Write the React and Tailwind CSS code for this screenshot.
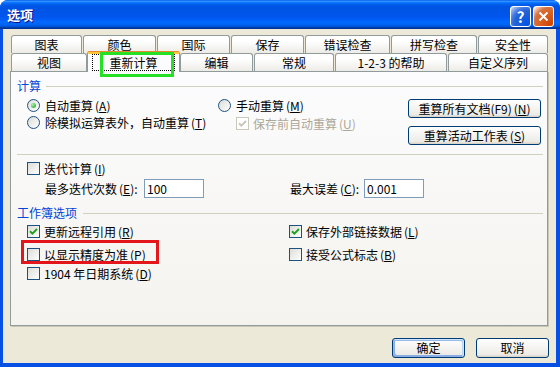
import React from 'react';

const font = "font-['Noto_Sans_CJK_SC',sans-serif]";
const xpButton =
  'flex items-center justify-center rounded-[3px] border border-[#003C74] bg-[linear-gradient(180deg,#fff,#ECEBE6_86%,#D6D0C5)] text-black';
const tabBase =
  'flex h-[18px] items-center justify-center rounded-t-[3px] border border-b-0 border-[#919B9C] bg-[linear-gradient(180deg,#fff,#fff_30%,#ECEBE6)]';

function Key({ k, muted }) {
  return (
    <span className={`ml-[2px] ${muted ? 'text-[#ACA899]' : ''}`}>
      (<span className="underline">{k}</span>)
    </span>
  );
}

function Box({ checked, disabled }) {
  return (
    <span
      className={`flex h-[13px] w-[13px] shrink-0 items-center justify-center border ${
        disabled ? 'border-[#CAC8BB] bg-white' : 'border-[#1C5180] bg-[linear-gradient(135deg,#DCDCD7,#fff)]'
      }`}
    >
      {checked && (
        <svg width="9" height="9" viewBox="0 0 9 9">
          <path d="M1 4.2 L3.4 6.6 L8 2" fill="none" stroke={disabled ? '#CAC8BB' : '#21A121'} strokeWidth="2" />
        </svg>
      )}
    </span>
  );
}

function Radio({ checked }) {
  return (
    <span className="flex h-[13px] w-[13px] shrink-0 items-center justify-center rounded-full border border-[#1C5180] bg-[linear-gradient(135deg,#DCDCD7,#fff)]">
      {checked && <span className="h-[5px] w-[5px] rounded-full bg-[radial-gradient(circle_at_30%_30%,#A5F0A5,#21A121)]" />}
    </span>
  );
}

function Check({ checked, disabled, children }) {
  return (
    <div className={`flex h-[17px] items-center gap-[4px] ${disabled ? 'text-[#ACA899]' : ''}`}>
      <Box checked={checked} disabled={disabled} />
      <span className="whitespace-nowrap">{children}</span>
    </div>
  );
}

function Option({ checked, children }) {
  return (
    <div className="flex h-[17px] items-center gap-[5px]">
      <Radio checked={checked} />
      <span className="whitespace-nowrap">{children}</span>
    </div>
  );
}

function Group({ title, lineGap }) {
  return (
    <div className="flex h-[14px] items-center">
      <span className="whitespace-nowrap text-[#0046D5]">{title}</span>
      <span className={`h-px flex-1 bg-[#D0D0BF] ${lineGap}`} />
    </div>
  );
}

export default function App() {
  return (
    <div
      className={`${font} flex h-[367px] w-[560px] flex-col overflow-hidden rounded-t-[8px] bg-[#0850E4] text-[12px] leading-[14px] text-black`}
    >
      {/* title bar */}
      <div className="flex h-[29px] shrink-0 items-center bg-[linear-gradient(180deg,#0058EE_0%,#3593FF_4%,#288EFF_6%,#127DFF_8%,#036FFC_10%,#0262EE_14%,#0057E5_20%,#0054E3_24%,#0055EB_56%,#005BF5_66%,#026AFE_76%,#0062EF_86%,#0052D6_92%,#0040AB_94%,#003092_100%)] pl-[7px] pr-[6px]">
        <span className="text-[13px] font-bold text-white [text-shadow:1px_1px_#0F1089]">选项</span>
        <div className="ml-auto mt-[3px] flex gap-[2px]">
          <div className="flex h-[21px] w-[21px] items-center justify-center rounded-[3px] border border-white bg-[radial-gradient(circle_at_90%_90%,#0054E9_0%,#2263D5_55%,#4479E4_70%,#A3BBEC_90%,#fff_100%)] text-[15px] font-bold leading-none text-white">
            ?
          </div>
          <div className="flex h-[21px] w-[21px] items-center justify-center rounded-[3px] border border-white bg-[radial-gradient(circle_at_90%_90%,#CC4600_0%,#DC6527_55%,#CD7546_70%,#FFCCB2_90%,#fff_100%)]">
            <svg width="11" height="11" viewBox="0 0 11 11">
              <path d="M1.5 1.5 L9.5 9.5 M9.5 1.5 L1.5 9.5" stroke="#fff" strokeWidth="2" />
            </svg>
          </div>
        </div>
      </div>

      {/* window body */}
      <div className="mb-[4px] ml-[3px] mr-[4px] flex flex-1 flex-col bg-[#ECE9D8] pt-[6px]">
        {/* tab row 1 */}
        <div className="ml-[8px] flex gap-[1px]">
          <div className={`${tabBase} w-[71px]`}>图表</div>
          <div className={`${tabBase} w-[73px]`}>颜色</div>
          <div className={`${tabBase} w-[73px]`}>国际</div>
          <div className={`${tabBase} w-[73px]`}>保存</div>
          <div className={`${tabBase} w-[85px]`}>错误检查</div>
          <div className={`${tabBase} w-[86px]`}>拼写检查</div>
          <div className={`${tabBase} w-[70px]`}>安全性</div>
        </div>
        {/* tab row 2 */}
        <div className="ml-[8px] flex h-[18px] items-start">
          <div className={`${tabBase} w-[76px]`}>视图</div>
          <div className="relative z-10 -mt-[2px] flex h-[21px] w-[93px] flex-col overflow-visible rounded-t-[3px] border-x border-[#919B9C] bg-[#FCFCFE]">
            <div className="h-px rounded-t-[3px] bg-[#E68B2C]" />
            <div className="h-[2px] bg-[#FFC73C]" />
            <div className="mx-[4px] flex h-[17px] items-center justify-center border border-dotted border-black">重新计算</div>
            <div className="absolute left-[12px] top-[1px] h-[25px] w-[74px] border-[3px] border-[#26E026]" />
          </div>
          <div className={`${tabBase} w-[73px]`}>编辑</div>
          <div className={`${tabBase} ml-[1px] w-[80px]`}>常规</div>
          <div className={`${tabBase} ml-[1px] w-[112px]`}>1-2-3 的帮助</div>
          <div className={`${tabBase} ml-[1px] w-[100px]`}>自定义序列</div>
        </div>

        {/* panel */}
        <div className="ml-[7px] flex h-[255px] w-[538px] flex-col border border-[#919B9C] bg-[linear-gradient(180deg,#FCFCFE,#F4F3EE)] pl-[6px] pr-[4px] pt-[7px] shadow-[1px_1px_0_#C9C6B6]">
          <Group title="计算" lineGap="ml-[5px]" />

          <div className="ml-[10px] mt-[4px] flex items-start">
            <div className="flex w-[191px] flex-col">
              <Option checked>
                自动重算<Key k="A" />
              </Option>
              <Option>
                除模拟运算表外，自动重算<Key k="T" />
              </Option>
            </div>
            <div className="flex w-[190px] flex-col">
              <Option>
                手动重算<Key k="M" />
              </Option>
              <div className="ml-[18px] mt-[1px]">
                <Check checked disabled>
                  保存前自动重算<Key k="U" muted />
                </Check>
              </div>
            </div>
            <div className="flex flex-col gap-[8px] pt-[2px]">
              <div className={`${xpButton} h-[19px] w-[133px]`}>
                重算所有文档(F9)<Key k="N" />
              </div>
              <div className={`${xpButton} h-[19px] w-[133px]`}>
                重算活动工作表<Key k="S" />
              </div>
            </div>
          </div>

          <div className="mt-[9px] h-px bg-[#D0D0BF]" />

          <div className="ml-[10px] mt-[5px]">
            <Check>
              迭代计算<Key k="I" />
            </Check>
          </div>

          <div className="ml-[28px] mt-[2px] flex h-[19px] items-center">
            <span className="w-[99px] whitespace-nowrap">
              最多迭代次数<Key k="E" />:
            </span>
            <div className="flex h-[19px] w-[60px] items-center border border-[#7F9DB9] bg-white pl-[2px]">100</div>
            <span className="ml-[86px] w-[74px] whitespace-nowrap">
              最大误差<Key k="C" />:
            </span>
            <div className="flex h-[19px] w-[60px] items-center border border-[#7F9DB9] bg-white pl-[2px]">0.001</div>
          </div>

          <div className="mt-[8px]">
            <Group title="工作簿选项" lineGap="ml-[6px]" />
          </div>

          <div className="ml-[10px] mt-[3px] flex">
            <div className="w-[262px]">
              <Check checked>
                更新远程引用<Key k="R" />
              </Check>
            </div>
            <Check checked>
              保存外部链接数据<Key k="L" />
            </Check>
          </div>

          <div className="relative ml-[10px] mt-[6px] flex">
            <div className="w-[262px]">
              <Check>
                以显示精度为准<Key k="P" />
              </Check>
            </div>
            <Check>
              接受公式标志<Key k="B" />
            </Check>
            <div className="absolute -left-[6px] -top-[6px] h-[24px] w-[138px] border-[3px] border-[#E3161C]" />
          </div>

          <div className="ml-[10px] mt-[2px]">
            <Check>
              1904 年日期系统<Key k="D" />
            </Check>
          </div>
        </div>

        {/* dialog buttons */}
        <div className="mt-[12px] flex justify-end gap-[11px] pr-[7px]">
          <div
            className={`${xpButton} h-[20px] w-[73px] shadow-[inset_-1px_1px_#CEE7FF,inset_1px_2px_#98B8EA,inset_-2px_2px_#BCD4F6,inset_1px_-1px_#89ADE4,inset_2px_-2px_#89ADE4]`}
          >
            确定
          </div>
          <div className={`${xpButton} h-[20px] w-[73px]`}>取消</div>
        </div>
      </div>
    </div>
  );
}
